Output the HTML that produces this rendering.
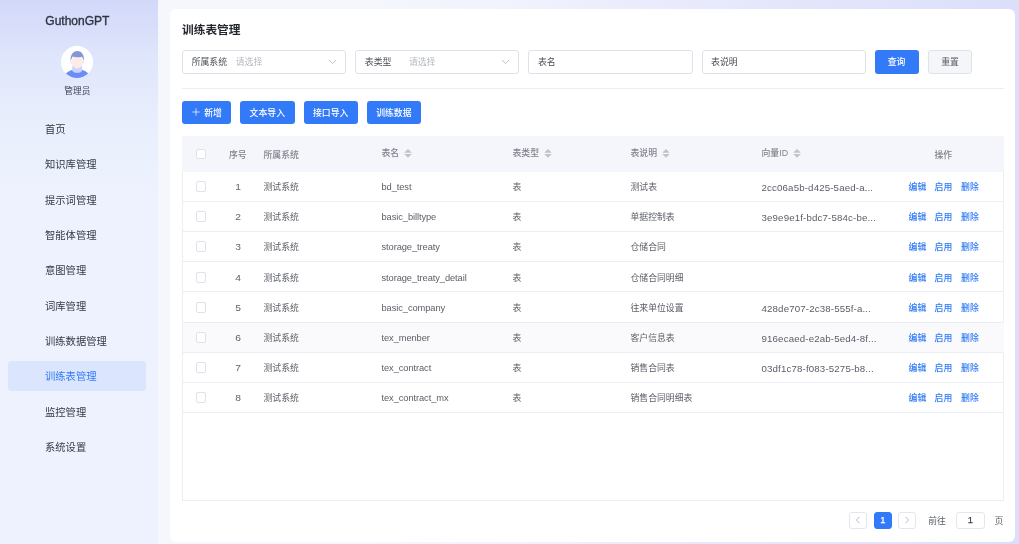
<!DOCTYPE html>
<html lang="zh-CN">
<head>
<meta charset="utf-8">
<title>训练表管理</title>
<style>
*{box-sizing:border-box;margin:0;padding:0}
html,body{width:1019px;height:544px;overflow:hidden}
body{position:relative;font-family:"Liberation Sans","Noto Sans CJK SC",sans-serif;font-size:8.85px;color:#5a5e66;
background:linear-gradient(90deg,#f5f7fd 0%,#f5f7fd 36%,#f2f4fd 46%,#e9ebfc 65%,#e1e4fb 84%,#dcdffa 100%);}
#app{position:absolute;left:0;top:0;width:1019px;height:544px;will-change:transform}
.abs{position:absolute}
/* sidebar */
#side{position:absolute;left:0;top:0;width:158px;height:544px;background:linear-gradient(180deg,#d2d8f9 0px,#e0e6fb 60px,#eaeffd 130px,#edf2fe 200px,#edf2fe 544px)}
#logo{position:absolute;left:45.3px;top:12px;transform:translateY(0.6px);font-size:12px;line-height:16px;color:#2f3542;-webkit-text-stroke:0.35px #2f3542;letter-spacing:0}
#avatar{position:absolute;left:61.2px;top:45.5px;width:32px;height:32px;border-radius:50%;background:#fff;overflow:hidden}
#role{position:absolute;left:0;width:154.6px;top:85px;text-align:center;font-size:8.7px;line-height:12px;color:#3b4150}
.mi{position:absolute;left:8px;width:138.4px;height:29.4px;line-height:30.6px;padding-left:37px;font-size:10.3px;color:#353943;border-radius:3px}
.mi.on{background:#dbe6fe;color:#2f7bf6}
/* card */
#card{position:absolute;left:170px;top:9px;width:845px;height:532.5px;background:#fff;border-radius:6px}
#title{position:absolute;left:182px;top:21px;transform:translateY(0.4px);font-size:11.7px;line-height:18px;font-weight:bold;color:#23262d}
.fld{position:absolute;top:50px;height:23.5px;width:164px;border:1px solid #dfe2ea;border-radius:3px;background:#fff;line-height:23.5px;font-size:8.85px;color:#4a4e57;white-space:nowrap}
.fld .lb{position:absolute;left:8.5px;top:0}
.fld .ph{position:absolute;top:0;color:#b4b8c0}
.fld svg{position:absolute;right:8.5px;top:7.5px}
.btn{position:absolute;height:23.3px;line-height:24.4px;border-radius:3px;font-size:8.85px;text-align:center;color:#fff;background:#337af8;white-space:nowrap;font-weight:500}
.btn.pl{background:#f5f6fa;border:1px solid #dfe2e8;color:#5a5e66;line-height:23px;font-weight:400}
#hr{position:absolute;left:182px;top:88px;width:822px;height:1px;background:#eceef3}
/* table */
#tbl{position:absolute;left:182px;top:136px;width:822px;height:364.5px;border:1px solid #ebeef5;border-top:none}
#th{position:absolute;left:182px;top:136px;width:822px;height:35.5px;background:#f5f6fb}
.row{position:absolute;left:182.5px;width:821px;height:30.15px;border-bottom:1px solid #ebeef5}
.row.alt{background:#fafafc}
.row.d1 .c{line-height:33px}
.c{position:absolute;line-height:31px;height:30px;white-space:nowrap;font-size:8.85px;color:#5a5e66}
.h .c{color:#80848e;font-weight:500;line-height:38.5px;height:35.5px;top:0}
.row .cb{top:9.3px;left:13.5px}
.row.d1 .cb{top:10.2px}
.cb{position:absolute;left:14px;width:10.4px;height:10.4px;border:1px solid #dfe2e9;border-radius:2px;background:#fff}
.op{color:#2f7bf6;font-weight:500;margin-left:-0.4px}
.c.l{font-size:9.3px;letter-spacing:-0.08px}
.c.hx{font-size:9.7px;letter-spacing:0.15px}
.c.n{font-size:9.7px;margin-top:-1.5px;transform:scaleX(1.06);color:#5f636b}
.sort{display:inline-block;vertical-align:middle;margin-left:4.6px;margin-top:-1px}
.h .c.s{line-height:34.5px}
/* pager */
.pg{position:absolute;top:511.6px;width:17.6px;height:17.6px;border-radius:3px;border:1px solid #e3e6ee;background:#fff;text-align:center;line-height:16.4px;font-size:9.4px;color:#3c404a}
.pg b{display:block;font-weight:400;line-height:14px;-webkit-text-stroke:0.25px currentColor}
.pg.on{background:#337af8;border-color:#337af8;color:#fff}
</style>
</head>
<body>
<div id="app">
<div id="side">
  <div id="logo">GuthonGPT</div>
  <div id="avatar">
    <svg width="32" height="32" viewBox="0 0 32 32">
      <circle cx="16" cy="16" r="16" fill="#fff"/>
      <path d="M3.4 32 C4.2 27 8 24.6 11.6 23.8 L20.8 23.8 C24.4 24.6 28 27 28.8 32 Z" fill="#6c8cf7"/>
      <path d="M11.3 20 L21.1 20 L21.1 24.2 C21.1 27.6 11.3 27.6 11.3 24.2 Z" fill="#ccd5fb"/>
      <circle cx="10.5" cy="16.4" r="1.1" fill="#f5dcdc"/><circle cx="21.9" cy="16.4" r="1.1" fill="#f5dcdc"/>
      <ellipse cx="16.2" cy="15.9" rx="5.5" ry="6.6" fill="#fcebea"/>
      <path d="M9.7 15.6 C8.8 9.4 12 5 16.3 5 C21 5 23.7 9.2 22.8 15.6 C22.4 13 21.6 11.5 20.6 10.7 C18 11.6 13.8 11.4 11.9 10.5 C10.7 11.6 10.1 13.4 9.7 15.6 Z" fill="#8796d4"/>
    </svg>
  </div>
  <div id="role">管理员</div>
  <div class="mi" style="top:115px">首页</div>
  <div class="mi" style="top:150.3px">知识库管理</div>
  <div class="mi" style="top:185.6px">提示词管理</div>
  <div class="mi" style="top:221px">智能体管理</div>
  <div class="mi" style="top:256.3px">意图管理</div>
  <div class="mi" style="top:291.6px">词库管理</div>
  <div class="mi" style="top:327px">训练数据管理</div>
  <div class="mi on" style="top:361.4px;line-height:31.8px">训练表管理</div>
  <div class="mi" style="top:397.6px">监控管理</div>
  <div class="mi" style="top:433px">系统设置</div>
</div>

<div id="card"></div>
<div id="title">训练表管理</div>

<div class="fld" style="left:182.2px"><span class="lb">所属系统</span><span class="ph" style="left:52.6px">请选择</span>
  <svg width="9" height="6" viewBox="0 0 9 6"><path d="M0.8 0.9 L4.5 4.6 L8.2 0.9" fill="none" stroke="#b9bdc6" stroke-width="0.9"/></svg></div>
<div class="fld" style="left:355.3px"><span class="lb">表类型</span><span class="ph" style="left:52.6px">请选择</span>
  <svg width="9" height="6" viewBox="0 0 9 6"><path d="M0.8 0.9 L4.5 4.6 L8.2 0.9" fill="none" stroke="#b9bdc6" stroke-width="0.9"/></svg></div>
<div class="fld" style="left:528.4px;width:164.5px"><span class="lb">表名</span></div>
<div class="fld" style="left:701.6px"><span class="lb">表说明</span></div>
<div class="btn" style="left:874.5px;top:50.2px;width:44px;height:23.5px">查询</div>
<div class="btn pl" style="left:928px;top:50.2px;width:44px;height:23.5px">重置</div>

<div id="hr"></div>

<div class="btn" style="left:182px;top:101px;width:48.8px;text-align:left;padding-left:10.2px"><svg width="8" height="8" viewBox="0 0 8 8" style="vertical-align:middle;margin-top:-2.8px;margin-right:4px"><path d="M4 0.3 V7.7 M0.3 4 H7.7" stroke="#fff" stroke-width="0.7" fill="none"/></svg>新增</div>
<div class="btn" style="left:240px;top:101px;width:54.6px">文本导入</div>
<div class="btn" style="left:303.5px;top:101px;width:54.3px">接口导入</div>
<div class="btn" style="left:366.6px;top:101px;width:54.5px">训练数据</div>

<div id="tbl"></div>
<div id="th" class="h">
  <span class="cb" style="top:12.6px"></span>
  <span class="c" style="left:47px">序号</span>
  <span class="c" style="left:81.5px">所属系统</span>
  <span class="c s" style="left:199.5px">表名<svg class="sort" width="8" height="9" viewBox="0 0 8 9"><path d="M4 0 L7.8 3.8 H0.2 Z M4 8.8 L7.8 5 H0.2 Z" fill="#bfc3cc"/></svg></span>
  <span class="c s" style="left:330.5px">表类型<svg class="sort" width="8" height="9" viewBox="0 0 8 9"><path d="M4 0 L7.8 3.8 H0.2 Z M4 8.8 L7.8 5 H0.2 Z" fill="#bfc3cc"/></svg></span>
  <span class="c s" style="left:448.5px">表说明<svg class="sort" width="8" height="9" viewBox="0 0 8 9"><path d="M4 0 L7.8 3.8 H0.2 Z M4 8.8 L7.8 5 H0.2 Z" fill="#bfc3cc"/></svg></span>
  <span class="c s" style="left:579.5px">向量ID<svg class="sort" width="8" height="9" viewBox="0 0 8 9"><path d="M4 0 L7.8 3.8 H0.2 Z M4 8.8 L7.8 5 H0.2 Z" fill="#bfc3cc"/></svg></span>
  <span class="c" style="left:752.5px">操作</span>
</div>

<div class="row d1" style="top:171px;height:31px"><span class="cb"></span><span class="c n" style="left:46.5px;width:18px;text-align:center">1</span><span class="c" style="left:81px">测试系统</span><span class="c l" style="left:199px">bd_test</span><span class="c" style="left:330px">表</span><span class="c" style="left:448px">测试表</span><span class="c hx" style="left:579px">2cc06a5b-d425-5aed-a...</span><span class="c op" style="left:726.5px">编辑</span><span class="c op" style="left:752.5px">启用</span><span class="c op" style="left:779px">删除</span></div>
<div class="row" style="top:202px;height:30px"><span class="cb"></span><span class="c n" style="left:46.5px;width:18px;text-align:center">2</span><span class="c" style="left:81px">测试系统</span><span class="c l" style="left:199px">basic_billtype</span><span class="c" style="left:330px">表</span><span class="c" style="left:448px">单据控制表</span><span class="c hx" style="left:579px">3e9e9e1f-bdc7-584c-be...</span><span class="c op" style="left:726.5px">编辑</span><span class="c op" style="left:752.5px">启用</span><span class="c op" style="left:779px">删除</span></div>
<div class="row" style="top:232px;height:30px"><span class="cb"></span><span class="c n" style="left:46.5px;width:18px;text-align:center">3</span><span class="c" style="left:81px">测试系统</span><span class="c l" style="left:199px">storage_treaty</span><span class="c" style="left:330px">表</span><span class="c" style="left:448px">仓储合同</span><span class="c op" style="left:726.5px">编辑</span><span class="c op" style="left:752.5px">启用</span><span class="c op" style="left:779px">删除</span></div>
<div class="row d1" style="top:262px;height:30px"><span class="cb"></span><span class="c n" style="left:46.5px;width:18px;text-align:center">4</span><span class="c" style="left:81px">测试系统</span><span class="c l" style="left:199px">storage_treaty_detail</span><span class="c" style="left:330px">表</span><span class="c" style="left:448px">仓储合同明细</span><span class="c op" style="left:726.5px">编辑</span><span class="c op" style="left:752.5px">启用</span><span class="c op" style="left:779px">删除</span></div>
<div class="row d1" style="top:292px;height:31px"><span class="cb"></span><span class="c n" style="left:46.5px;width:18px;text-align:center">5</span><span class="c" style="left:81px">测试系统</span><span class="c l" style="left:199px">basic_company</span><span class="c" style="left:330px">表</span><span class="c" style="left:448px">往来单位设置</span><span class="c hx" style="left:579px">428de707-2c38-555f-a...</span><span class="c op" style="left:726.5px">编辑</span><span class="c op" style="left:752.5px">启用</span><span class="c op" style="left:779px">删除</span></div>
<div class="row alt" style="top:323px;height:30px"><span class="cb"></span><span class="c n" style="left:46.5px;width:18px;text-align:center">6</span><span class="c" style="left:81px">测试系统</span><span class="c l" style="left:199px">tex_menber</span><span class="c" style="left:330px">表</span><span class="c" style="left:448px">客户信息表</span><span class="c hx" style="left:579px">916ecaed-e2ab-5ed4-8f...</span><span class="c op" style="left:726.5px">编辑</span><span class="c op" style="left:752.5px">启用</span><span class="c op" style="left:779px">删除</span></div>
<div class="row" style="top:353px;height:30px"><span class="cb"></span><span class="c n" style="left:46.5px;width:18px;text-align:center">7</span><span class="c" style="left:81px">测试系统</span><span class="c l" style="left:199px">tex_contract</span><span class="c" style="left:330px">表</span><span class="c" style="left:448px">销售合同表</span><span class="c hx" style="left:579px">03df1c78-f083-5275-b8...</span><span class="c op" style="left:726.5px">编辑</span><span class="c op" style="left:752.5px">启用</span><span class="c op" style="left:779px">删除</span></div>
<div class="row" style="top:383px;height:30px"><span class="cb"></span><span class="c n" style="left:46.5px;width:18px;text-align:center">8</span><span class="c" style="left:81px">测试系统</span><span class="c l" style="left:199px">tex_contract_mx</span><span class="c" style="left:330px">表</span><span class="c" style="left:448px">销售合同明细表</span><span class="c op" style="left:726.5px">编辑</span><span class="c op" style="left:752.5px">启用</span><span class="c op" style="left:779px">删除</span></div>

<div class="pg" style="left:849.4px"><svg width="6" height="8" viewBox="0 0 6 8" style="vertical-align:middle;margin-top:-2px"><path d="M4.4 0.8 L1.4 4 L4.4 7.2" fill="none" stroke="#b4b8c0" stroke-width="0.9"/></svg></div>
<div class="pg on" style="left:874.1px"><b>1</b></div>
<div class="pg" style="left:898.2px"><svg width="6" height="8" viewBox="0 0 6 8" style="vertical-align:middle;margin-top:-2px"><path d="M1.6 0.8 L4.6 4 L1.6 7.2" fill="none" stroke="#b4b8c0" stroke-width="0.9"/></svg></div>
<div class="abs" style="left:928.2px;top:512px;line-height:18px;font-size:8.85px;color:#5a5e66">前往</div>
<div class="pg" style="left:956px;width:28.6px"><b>1</b></div>
<div class="abs" style="left:994.6px;top:512px;line-height:18px;font-size:8.85px;color:#5a5e66">页</div>
</div>
</body>
</html>
